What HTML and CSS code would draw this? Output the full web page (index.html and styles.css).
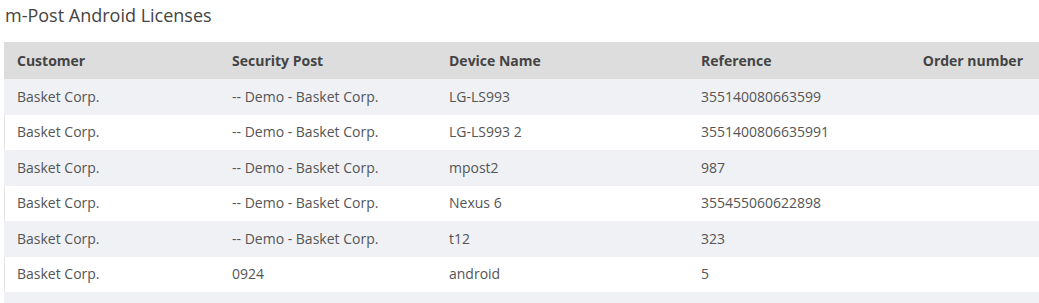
FILE: index.html
```html
<!DOCTYPE html>
<html>
<head>
<meta charset="utf-8">
<link rel="stylesheet" href="styles.css">
</head>
<body>
<div class="page">
  <h1 class="title">m-Post Android Licenses</h1>
  <table class="licenses">
    <colgroup>
      <col class="c1"><col class="c2"><col class="c3"><col class="c4"><col class="c5">
    </colgroup>
    <thead>
      <tr><th>Customer</th><th>Security Post</th><th>Device Name</th><th>Reference</th><th>Order number</th></tr>
    </thead>
    <tbody>
      <tr><td>Basket Corp.</td><td>-- Demo - Basket Corp.</td><td>LG-LS993</td><td>355140080663599</td><td></td></tr>
      <tr><td>Basket Corp.</td><td>-- Demo - Basket Corp.</td><td>LG-LS993 2</td><td>3551400806635991</td><td></td></tr>
      <tr><td>Basket Corp.</td><td>-- Demo - Basket Corp.</td><td>mpost2</td><td>987</td><td></td></tr>
      <tr><td>Basket Corp.</td><td>-- Demo - Basket Corp.</td><td>Nexus 6</td><td>355455060622898</td><td></td></tr>
      <tr><td>Basket Corp.</td><td>-- Demo - Basket Corp.</td><td>t12</td><td>323</td><td></td></tr>
      <tr><td>Basket Corp.</td><td>0924</td><td>android</td><td>5</td><td></td></tr>
      <tr><td>&nbsp;</td><td></td><td></td><td></td><td></td></tr>
    </tbody>
  </table>
</div>
</body>
</html>
```
FILE: styles.css
```css
html, body {
  margin: 0;
  padding: 0;
  background: #ffffff;
}
body {
  font-family: "Open Sans", "Liberation Sans", sans-serif;
  color: #555555;
  overflow: hidden;
}
.page {
  padding: 0 0 0 4px;
}
.title {
  margin: 0;
  padding: 3px 0 0 1px;
  height: 42px;
  box-sizing: border-box;
  font-size: 18px;
  font-weight: 400;
  line-height: 25px;
  color: #444444;
}
.licenses {
  width: 1035px;
  border-collapse: collapse;
  table-layout: fixed;
  font-size: 14px;
}
.c1 { width: 215px; }
.c2 { width: 217px; }
.c3 { width: 252px; }
.c4 { width: 222px; }
.c5 { width: 129px; }
.licenses th {
  background: #dddddd;
  color: #444444;
  font-weight: 700;
  text-align: left;
  padding: 8.5px 13px;
  line-height: 20px;
  white-space: nowrap;
}
.licenses th:last-child {
  text-align: right;
  padding-right: 16px;
  padding-left: 0;
}
.licenses td {
  padding: 7.75px 13px;
  line-height: 20px;
  white-space: nowrap;
}
.licenses tbody tr {
  box-shadow: inset 1px 0 0 #e4e4e4;
}
.licenses tbody tr:nth-child(odd) td {
  background: #f0f1f4;
}
```
